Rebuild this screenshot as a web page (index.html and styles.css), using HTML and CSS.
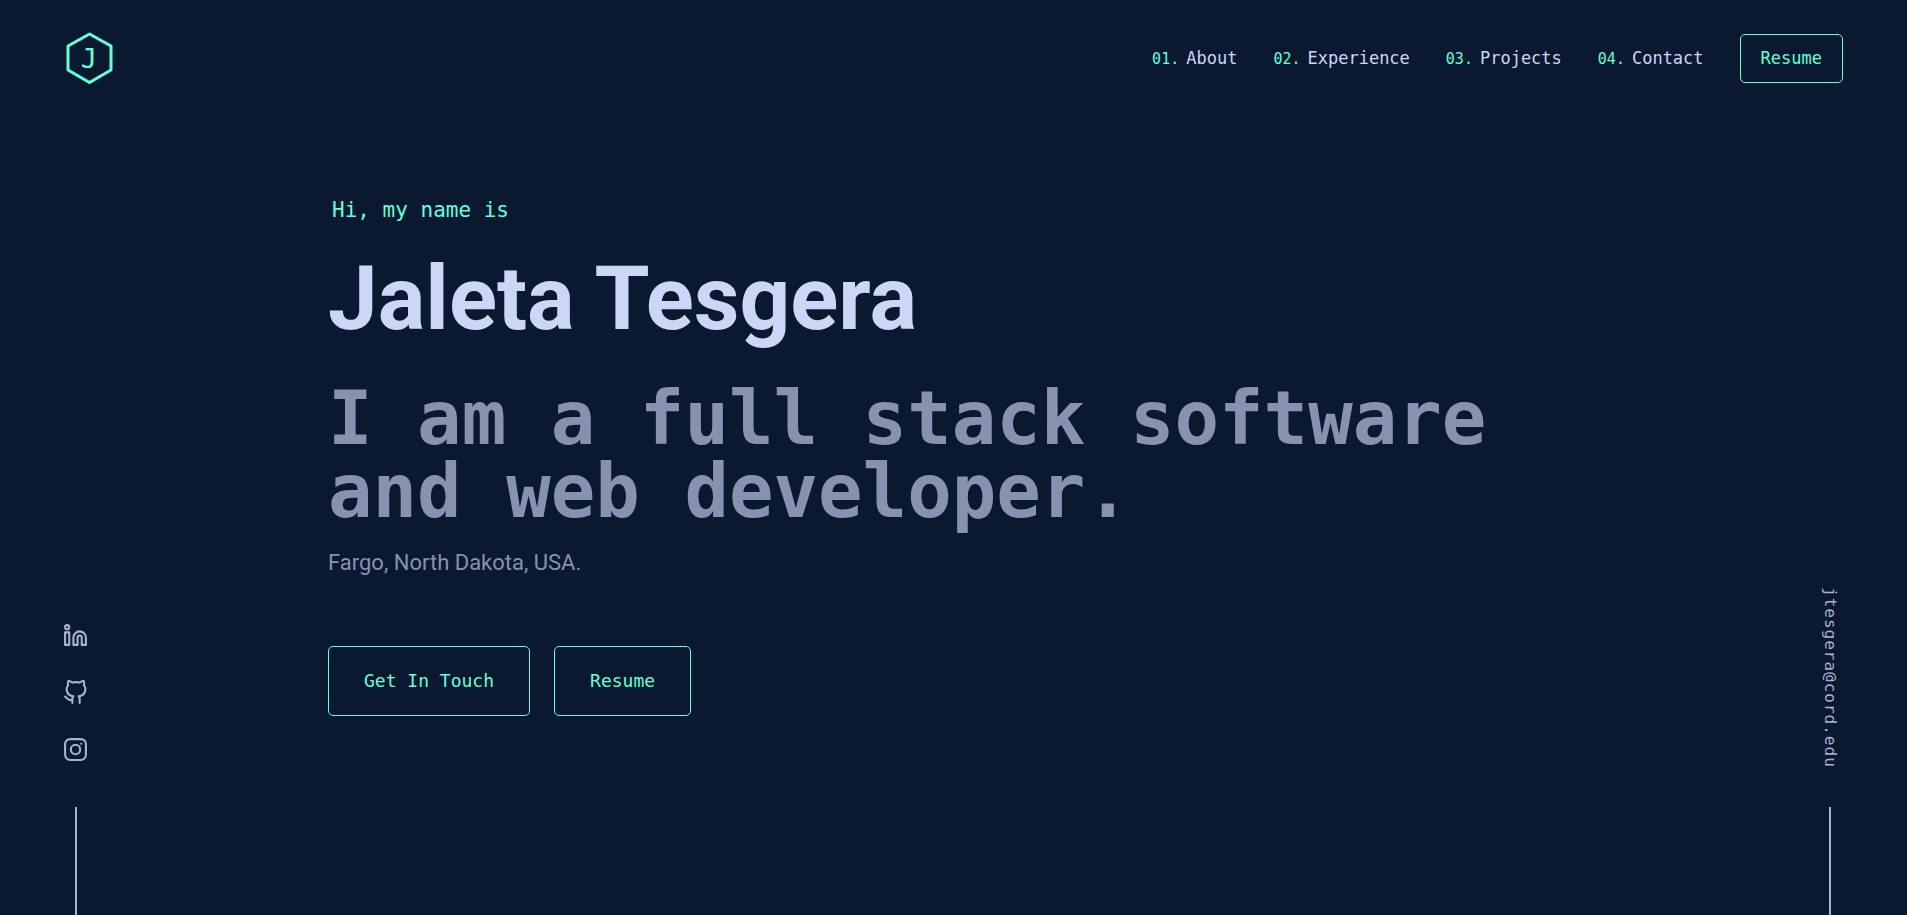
FILE: index.html
```html
<!DOCTYPE html>
<html lang="en">
<head>
  <meta charset="utf-8">
  <meta name="viewport" content="width=device-width, initial-scale=1">
  <title>Jaleta Tesgera</title>
  <link rel="stylesheet" href="styles.css">
</head>
<body>
  <header class="header">
    <a class="logo" href="#top" aria-label="Home">
      <svg class="logo-mark" viewBox="0 0 50 54" aria-hidden="true">
        <path class="logo-hex" d="M25.500 3 47 15v24L25.500 51.500 4 39V15Z"/>
        <text class="logo-letter" x="25" y="37">J</text>
      </svg>
    </a>
    <nav class="nav">
      <ol class="nav-list">
        <li><a class="nav-link" href="#about"><span class="nav-num">01.</span>About</a></li>
        <li><a class="nav-link" href="#experience"><span class="nav-num">02.</span>Experience</a></li>
        <li><a class="nav-link" href="#projects"><span class="nav-num">03.</span>Projects</a></li>
        <li><a class="nav-link" href="#contact"><span class="nav-num">04.</span>Contact</a></li>
      </ol>
      <a class="button button-small" href="#resume">Resume</a>
    </nav>
  </header>

  <div class="page">
    <aside class="side side-left">
      <ul class="social">
        <li><a href="#linkedin" aria-label="LinkedIn"><svg class="icon" viewBox="0 0 24 24"><path d="M16 8a6 6 0 0 1 6 6v7h-4v-7a2 2 0 0 0-4 0v7h-4v-7a6 6 0 0 1 6-6z"/><rect x="2" y="9" width="4" height="12"/><circle cx="4" cy="4" r="2"/></svg></a></li>
        <li><a href="#github" aria-label="GitHub"><svg class="icon" viewBox="0 0 24 24"><path d="M9 19c-5 1.500-5-2.500-7-3m14 6v-3.870a3.370 3.370 0 0 0-.940-2.610c3.140-.350 6.440-1.540 6.440-7A5.440 5.440 0 0 0 20 4.770 5.070 5.070 0 0 0 19.910 1S18.730.650 16 2.480a13.380 13.380 0 0 0-7 0C6.270.650 5.090 1 5.090 1A5.070 5.070 0 0 0 5 4.770a5.440 5.440 0 0 0-1.500 3.780c0 5.420 3.300 6.610 6.440 7A3.370 3.370 0 0 0 9 18.130V22"/></svg></a></li>
        <li><a href="#instagram" aria-label="Instagram"><svg class="icon" viewBox="0 0 24 24"><rect x="2" y="2" width="20" height="20" rx="5"/><circle cx="12" cy="12" r="4.500"/><path d="M17.500 6.500h.010"/></svg></a></li>
      </ul>
    </aside>

    <main class="hero" id="top">
      <p class="greeting">Hi, my name is</p>
      <h1 class="name">Jaleta Tesgera</h1>
      <h2 class="tagline">I am a full stack software and web developer.</h2>
      <p class="place">Fargo, North Dakota, USA.</p>
      <div class="actions">
        <a class="button" href="#contact">Get In Touch</a>
        <a class="button" href="#resume">Resume</a>
      </div>
    </main>

    <aside class="side side-right">
      <a class="email" href="mailto:jtesgera@cord.edu">jtesgera@cord.edu</a>
    </aside>
  </div>
</body>
</html>
```

FILE: styles.css
```css
:root {
  --navy: #0a192f;
  --green: #64ffda;
  --white: #ccd6f6;
  --light: #a8b2d1;
  --slate: #8892b0;
  --mono: "DejaVu Sans Mono", monospace;
  --sans: Roboto, sans-serif;
}

* {
  box-sizing: border-box;
}

body {
  margin: 0;
  min-height: 100vh;
  display: flex;
  flex-direction: column;
  background: var(--navy);
  color: var(--slate);
  font-family: var(--sans);
}

a {
  color: inherit;
  text-decoration: none;
}

h1, h2, p, ul, ol {
  margin: 0;
  padding: 0;
}

ul, ol {
  list-style: none;
}

.header {
  display: flex;
  align-items: center;
  justify-content: space-between;
  padding: 31px 64px;
}

.logo-mark {
  display: block;
  width: 50px;
  height: 54px;
}

.logo-hex {
  fill: none;
  stroke: var(--green);
  stroke-width: 3;
  stroke-linejoin: round;
}

.logo-letter {
  fill: var(--green);
  font: 27px var(--mono);
  text-anchor: middle;
}

.nav {
  display: flex;
  align-items: center;
  gap: 36px;
}

.nav-list {
  display: flex;
  gap: 36px;
}

.nav-link {
  display: flex;
  align-items: baseline;
  gap: 7px;
  color: var(--white);
  font: 17px/24px var(--mono);
}

.nav-num {
  color: var(--green);
  font-size: 15px;
}

.button {
  padding: 22px 35px;
  border: 1px solid var(--green);
  border-radius: 5px;
  color: var(--green);
  font: 18px/24px var(--mono);
}

.button-small {
  padding: 11px 20px 12px;
  font-size: 17px;
}

.page {
  flex: 1;
  display: grid;
  grid-template-columns: 265px 1fr 264px;
  padding: 0 64px 0 63px;
}

.side {
  display: flex;
  flex-direction: column;
  align-self: end;
}

.side::after {
  content: "";
  width: 2px;
  height: 108px;
  background: var(--light);
}

.side-left {
  justify-self: start;
  align-items: center;
}

.side-right {
  justify-self: end;
  align-items: center;
}

.social {
  display: grid;
  gap: 32px;
  margin-bottom: 45px;
}

.icon {
  display: block;
  width: 25px;
  height: 25px;
  fill: none;
  stroke: var(--light);
  stroke-width: 2;
  stroke-linecap: round;
  stroke-linejoin: round;
}

.email {
  margin-bottom: 39px;
  color: var(--light);
  font: 16px/26px var(--mono);
  letter-spacing: 1px;
  writing-mode: vertical-rl;
}

.greeting {
  padding: 80px 4px 0;
  color: var(--green);
  font: 21px/28px var(--mono);
}

.name {
  margin-top: 25px;
  color: var(--white);
  font-size: 89px;
  font-weight: 700;
  line-height: 100px;
}

.tagline {
  margin-top: 33px;
  font: 700 74px/73px var(--mono);
}

.place {
  margin-top: 19px;
  font-size: 22px;
  line-height: 32px;
}

.actions {
  display: flex;
  gap: 24px;
  margin-top: 67px;
}
```
